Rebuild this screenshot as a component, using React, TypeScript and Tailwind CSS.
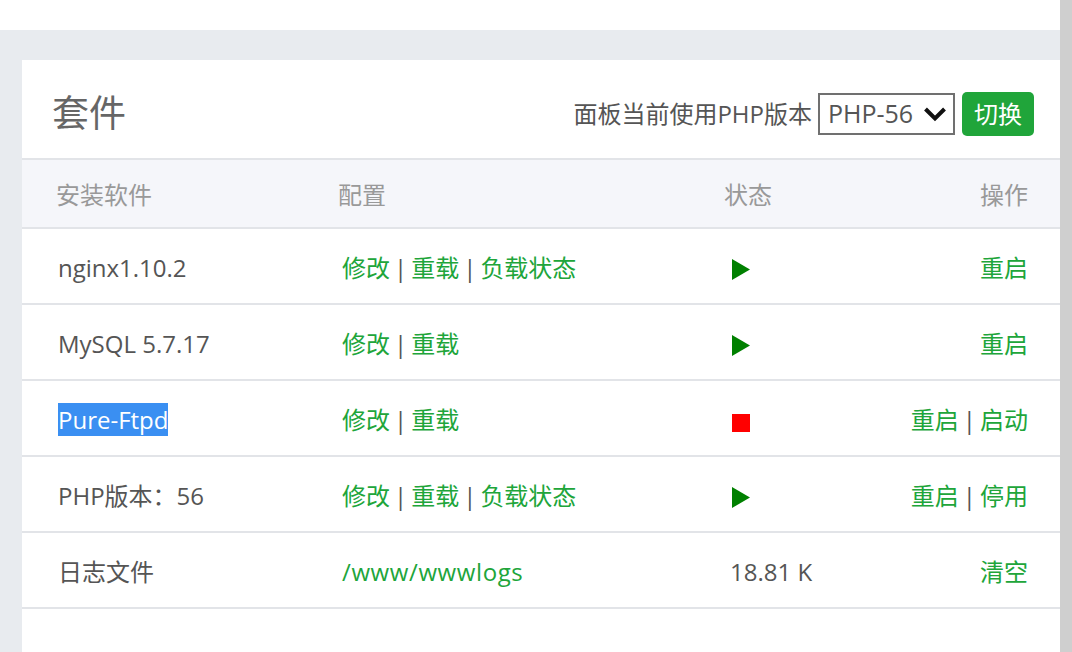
import React from 'react';

type Row = {
  name: string;
  config: string[] | string;
  status: 'run' | 'stop' | string;
  actions: string[];
  selected?: boolean;
};

const ROWS: Row[] = [
  { name: 'nginx1.10.2', config: ['修改', '重载', '负载状态'], status: 'run', actions: ['重启'] },
  { name: 'MySQL 5.7.17', config: ['修改', '重载'], status: 'run', actions: ['重启'] },
  { name: 'Pure-Ftpd', config: ['修改', '重载'], status: 'stop', actions: ['重启', '启动'], selected: true },
  { name: 'PHP版本：56', config: ['修改', '重载', '负载状态'], status: 'run', actions: ['重启', '停用'] },
  { name: '日志文件', config: '/www/wwwlogs', status: '18.81 K', actions: ['清空'] },
];

function Links({ items }: { items: string[] }) {
  return (
    <span>
      {items.map((t, i) => (
        <React.Fragment key={t + i}>
          {i > 0 && <span className="text-[#555] px-[4px]">|</span>}
          <span className="text-[#20a53a]">{t}</span>
        </React.Fragment>
      ))}
    </span>
  );
}

function Status({ s }: { s: string }) {
  if (s === 'run') {
    return (
      <svg width="18" height="21" viewBox="0 0 18 21" className="ml-[8px] mt-[4px]">
        <polygon points="0,0 18,10.5 0,21" fill="#008000" />
      </svg>
    );
  }
  if (s === 'stop') {
    return <div className="ml-[8px] mt-[6px] w-[18px] h-[18px] bg-[#ff0000]" />;
  }
  return <span className="ml-[6px] text-[#555]">{s}</span>;
}

export default function App() {
  return (
    <div
      className="w-[1072px] h-[652px] overflow-hidden flex bg-white"
      style={{ fontFamily: '"Open Sans", "Noto Sans CJK SC", sans-serif' }}
    >
      <div className="flex-1 flex flex-col">
        <div className="h-[30px] bg-white" />
        <div className="flex-1 bg-[#e8ebef] pt-[30px] pl-[22px]">
          <div className="bg-white h-full flex flex-col">
            {/* card header */}
            <div className="h-[100px] border-b-2 border-[#e2e4e8] flex items-center justify-between pl-[30px] pr-[26px]">
              <div className="text-[37px] text-[#666] leading-none mt-[6px]">套件</div>
              <div className="flex items-center text-[24px] text-[#555] mt-[9px]">
                <span>面板当前使用PHP版本</span>
                <div className="ml-[6px] w-[137px] h-[42px] border-2 border-[#707070] flex items-center justify-between pl-[8px] pr-[6px]">
                  <span className="text-[#555] text-[25px]">PHP-56</span>
                  <svg width="24" height="16" viewBox="0 0 24 16">
                    <polyline points="2.5,3 12,12.5 21.5,3" fill="none" stroke="#111" strokeWidth="4" />
                  </svg>
                </div>
                <button className="ml-[7px] w-[72px] h-[44px] bg-[#20a53a] rounded-[5px] text-white text-[24px] leading-none">
                  切换
                </button>
              </div>
            </div>
            {/* table header */}
            <div className="h-[69px] bg-[#f5f6fa] border-b-2 border-[#e2e4e8] grid grid-cols-[282px_386px_1fr_auto] items-center text-[24px] text-[#999] pl-[34px] pr-[32px] pt-[3px]">
              <span>安装软件</span>
              <span>配置</span>
              <span>状态</span>
              <span>操作</span>
            </div>
            {ROWS.map((r) => (
              <div
                key={r.name}
                className="h-[76px] border-b-2 border-[#e2e4e8] grid grid-cols-[284px_382px_1fr_auto] items-center text-[24px] text-[#555] pl-[36px] pr-[32px] pt-[3px]"
              >
                <span>
                  {r.selected ? (
                    <span className="bg-[#3a8ff2] text-white">{r.name}</span>
                  ) : (
                    r.name
                  )}
                </span>
                <span>
                  {Array.isArray(r.config) ? (
                    <Links items={r.config} />
                  ) : (
                    <span className="text-[#20a53a] tracking-[0.6px]">{r.config}</span>
                  )}
                </span>
                <span className="flex items-center">
                  <Status s={r.status} />
                </span>
                <span className="text-right">
                  <Links items={r.actions} />
                </span>
              </div>
            ))}
          </div>
        </div>
      </div>
      <div className="w-[12px] bg-[#cfcfcf]" />
    </div>
  );
}
